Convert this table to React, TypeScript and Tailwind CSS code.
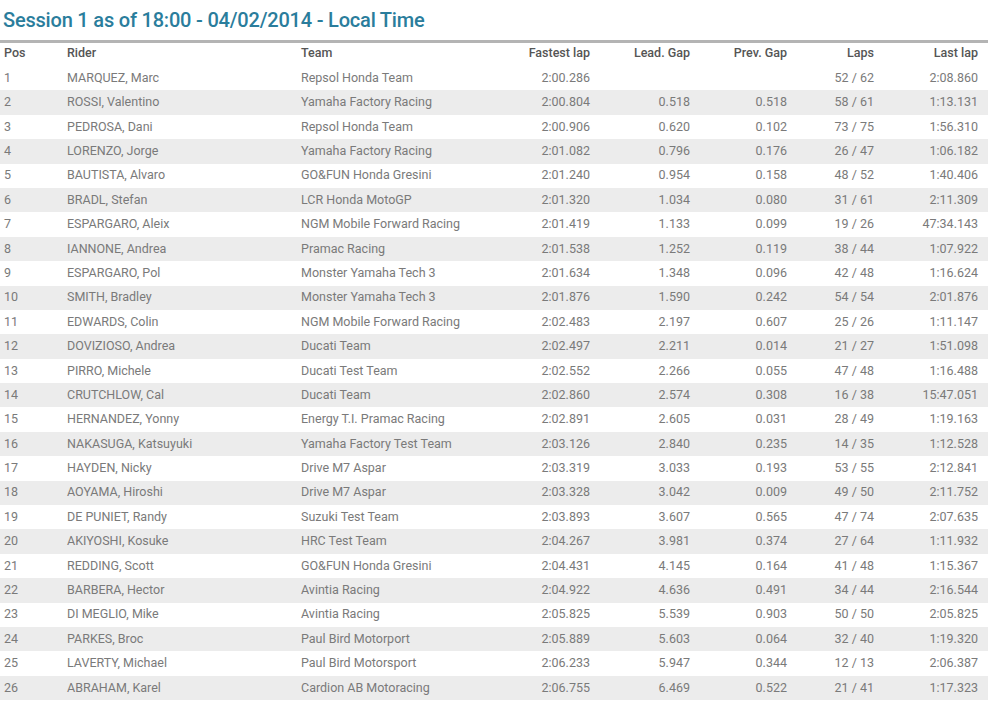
const rows: [string, string, string, string, string, string, string, string][] = [
  ["1", "MARQUEZ, Marc", "Repsol Honda Team", "2:00.286", "", "", "52 / 62", "2:08.860"],
  ["2", "ROSSI, Valentino", "Yamaha Factory Racing", "2:00.804", "0.518", "0.518", "58 / 61", "1:13.131"],
  ["3", "PEDROSA, Dani", "Repsol Honda Team", "2:00.906", "0.620", "0.102", "73 / 75", "1:56.310"],
  ["4", "LORENZO, Jorge", "Yamaha Factory Racing", "2:01.082", "0.796", "0.176", "26 / 47", "1:06.182"],
  ["5", "BAUTISTA, Alvaro", "GO&FUN Honda Gresini", "2:01.240", "0.954", "0.158", "48 / 52", "1:40.406"],
  ["6", "BRADL, Stefan", "LCR Honda MotoGP", "2:01.320", "1.034", "0.080", "31 / 61", "2:11.309"],
  ["7", "ESPARGARO, Aleix", "NGM Mobile Forward Racing", "2:01.419", "1.133", "0.099", "19 / 26", "47:34.143"],
  ["8", "IANNONE, Andrea", "Pramac Racing", "2:01.538", "1.252", "0.119", "38 / 44", "1:07.922"],
  ["9", "ESPARGARO, Pol", "Monster Yamaha Tech 3", "2:01.634", "1.348", "0.096", "42 / 48", "1:16.624"],
  ["10", "SMITH, Bradley", "Monster Yamaha Tech 3", "2:01.876", "1.590", "0.242", "54 / 54", "2:01.876"],
  ["11", "EDWARDS, Colin", "NGM Mobile Forward Racing", "2:02.483", "2.197", "0.607", "25 / 26", "1:11.147"],
  ["12", "DOVIZIOSO, Andrea", "Ducati Team", "2:02.497", "2.211", "0.014", "21 / 27", "1:51.098"],
  ["13", "PIRRO, Michele", "Ducati Test Team", "2:02.552", "2.266", "0.055", "47 / 48", "1:16.488"],
  ["14", "CRUTCHLOW, Cal", "Ducati Team", "2:02.860", "2.574", "0.308", "16 / 38", "15:47.051"],
  ["15", "HERNANDEZ, Yonny", "Energy T.I. Pramac Racing", "2:02.891", "2.605", "0.031", "28 / 49", "1:19.163"],
  ["16", "NAKASUGA, Katsuyuki", "Yamaha Factory Test Team", "2:03.126", "2.840", "0.235", "14 / 35", "1:12.528"],
  ["17", "HAYDEN, Nicky", "Drive M7 Aspar", "2:03.319", "3.033", "0.193", "53 / 55", "2:12.841"],
  ["18", "AOYAMA, Hiroshi", "Drive M7 Aspar", "2:03.328", "3.042", "0.009", "49 / 50", "2:11.752"],
  ["19", "DE PUNIET, Randy", "Suzuki Test Team", "2:03.893", "3.607", "0.565", "47 / 74", "2:07.635"],
  ["20", "AKIYOSHI, Kosuke", "HRC Test Team", "2:04.267", "3.981", "0.374", "27 / 64", "1:11.932"],
  ["21", "REDDING, Scott", "GO&FUN Honda Gresini", "2:04.431", "4.145", "0.164", "41 / 48", "1:15.367"],
  ["22", "BARBERA, Hector", "Avintia Racing", "2:04.922", "4.636", "0.491", "34 / 44", "2:16.544"],
  ["23", "DI MEGLIO, Mike", "Avintia Racing", "2:05.825", "5.539", "0.903", "50 / 50", "2:05.825"],
  ["24", "PARKES, Broc", "Paul Bird Motorport", "2:05.889", "5.603", "0.064", "32 / 40", "1:19.320"],
  ["25", "LAVERTY, Michael", "Paul Bird Motorsport", "2:06.233", "5.947", "0.344", "12 / 13", "2:06.387"],
  ["26", "ABRAHAM, Karel", "Cardion AB Motoracing", "2:06.755", "6.469", "0.522", "21 / 41", "1:17.323"],
];

// column template shared by header and rows
const cols = "grid grid-cols-[67px_234px_206px_83px_100px_97px_87px_104px] items-center";

export default function App() {
  return (
    <div className="w-[990px] h-[708px] bg-white font-['Roboto',sans-serif] overflow-hidden">
      <h1 className="pl-[3px] pt-[6px] h-[40px] text-[20px] leading-[28px] font-medium text-[#2a7d9c] tracking-[-0.2px]">
        Session 1 as of 18:00 - 04/02/2014 - Local Time
      </h1>
      <div className="w-[988px] border-t-[3px] border-[#b4b4b4]">
        <div className={`${cols} h-[23px] pb-[2px] text-[12.5px] font-medium text-[#555]`}>
          <div className="pl-[4px]">Pos</div>
          <div>Rider</div>
          <div>Team</div>
          <div className="text-right">Fastest lap</div>
          <div className="text-right">Lead. Gap</div>
          <div className="text-right">Prev. Gap</div>
          <div className="text-right">Laps</div>
          <div className="text-right">Last lap</div>
        </div>
        {rows.map((r, i) => (
          <div
            key={r[0]}
            className={`${cols} h-[24.4px] text-[12.5px] text-[#7a7a7a] ${i % 2 === 1 ? "bg-[#ececec]" : "bg-white"}`}
          >
            <div className="pl-[4px]">{r[0]}</div>
            <div>{r[1]}</div>
            <div>{r[2]}</div>
            <div className="text-right">{r[3]}</div>
            <div className="text-right">{r[4]}</div>
            <div className="text-right">{r[5]}</div>
            <div className="text-right">{r[6]}</div>
            <div className="text-right">{r[7]}</div>
          </div>
        ))}
      </div>
    </div>
  );
}
